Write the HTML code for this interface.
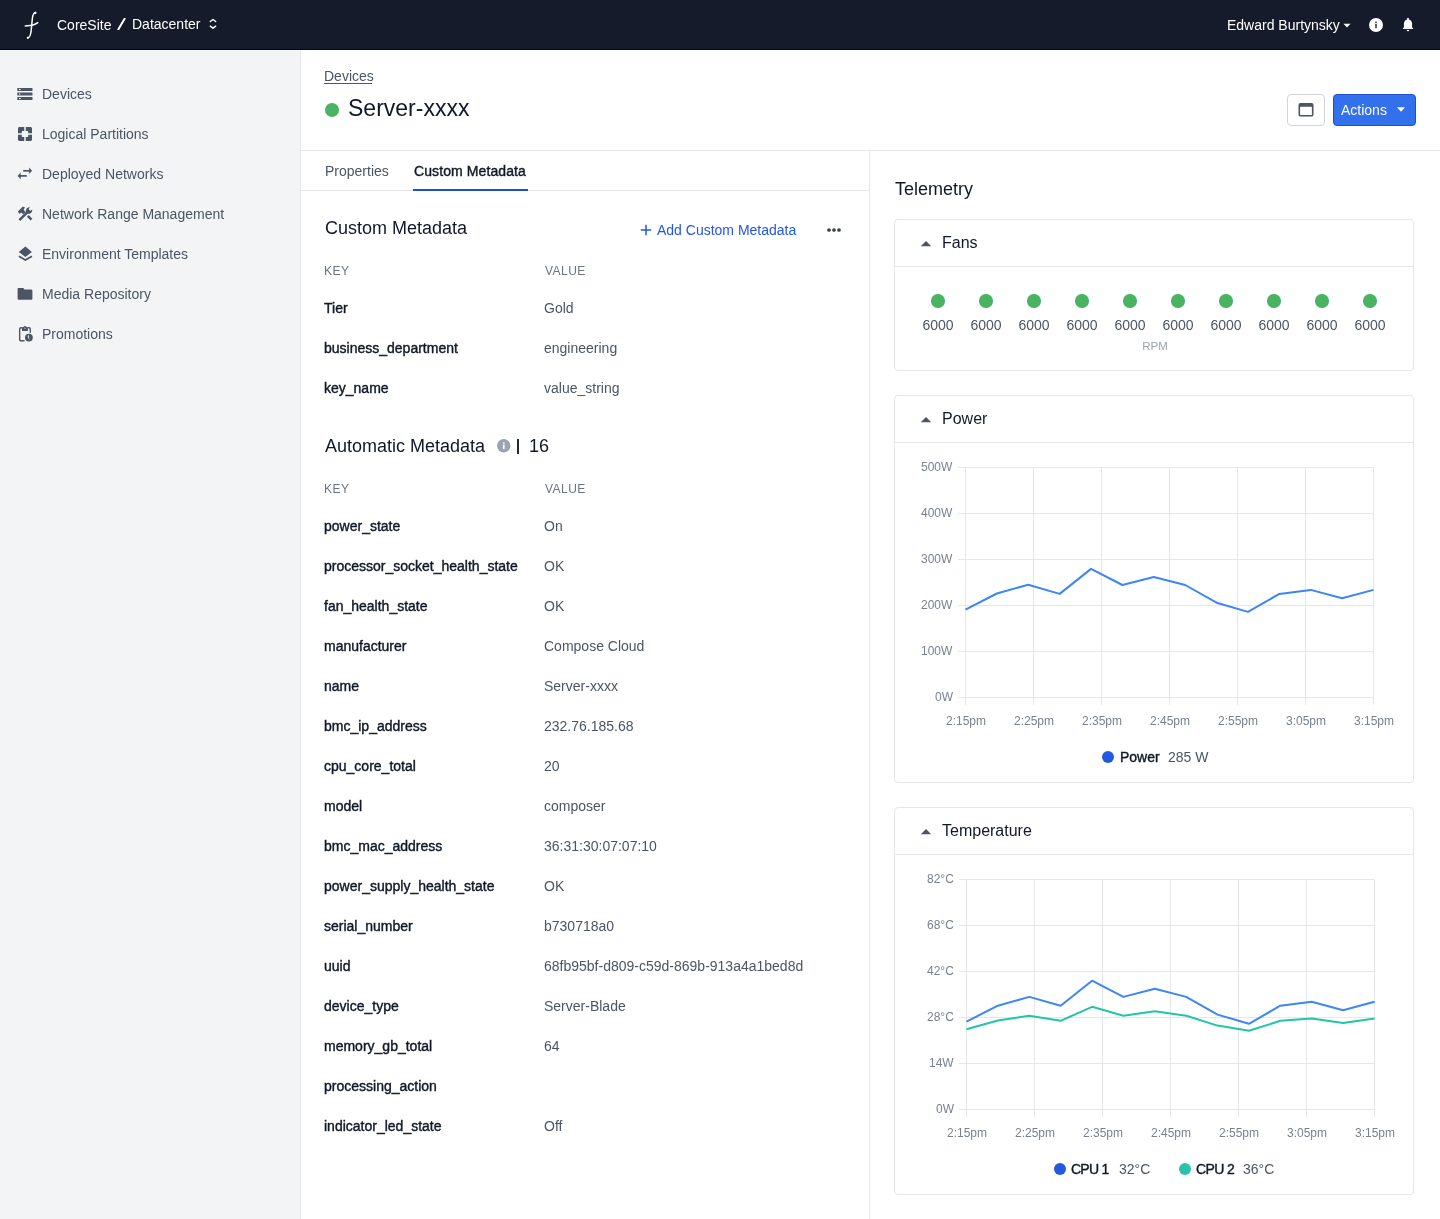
<!DOCTYPE html>
<html><head><meta charset="utf-8"><title>Server-xxxx</title>
<style>
html,body{margin:0;padding:0;background:#fff;width:1440px;height:1219px;overflow:hidden;position:relative}
body{font-family:"Liberation Sans",sans-serif}
.t{position:absolute;white-space:nowrap;line-height:1;will-change:transform}
</style></head><body>
<div style="position:absolute;left:0;top:0;width:1440px;height:50px;background:#151b2b;border-bottom:1px solid #000a18;box-sizing:border-box"></div>
<svg style="position:absolute;left:22px;top:10px" width="20" height="30" viewBox="0 0 20 30"><path d="M13.6 2.6 C11.6 2.8 10.7 5.5 10.3 9 L9.1 21 C8.7 25.2 7.6 27.4 5.7 27.9" fill="none" stroke="#fff" stroke-width="1.5" stroke-linecap="round"/><circle cx="13.4" cy="2.9" r="1.05" fill="#fff"/><circle cx="5.8" cy="27.7" r="1.05" fill="#fff"/><path d="M3.3 15.9 C5.5 15.7 8 15.6 10 15.2 C12 14.8 14 14 15.8 12.7" fill="none" stroke="#fff" stroke-width="1.5" stroke-linecap="round"/></svg>
<div class="t" style="left:56.5px;top:18.15px;font-size:14px;color:#ffffff;">CoreSite</div>
<svg style="position:absolute;left:117px;top:18px" width="9" height="12" viewBox="0 0 9 12"><path d="M7.6 0.8 L1.4 11.2" stroke="#fff" stroke-width="2" stroke-linecap="round"/></svg>
<div class="t" style="left:131.5px;top:17.15px;font-size:14px;color:#ffffff;">Datacenter</div>
<svg style="position:absolute;left:209px;top:18px" width="8" height="12" viewBox="0 0 8 12"><path d="M1.3 3.5 L4 1.5 L6.7 3.5 M1.3 8.2 L4 10.2 L6.7 8.2" fill="none" stroke="#fff" stroke-width="1.5" stroke-linecap="round" stroke-linejoin="round"/></svg>
<div class="t" style="left:1226.5px;top:18.15px;font-size:14px;color:#ffffff;">Edward Burtynsky</div>
<svg style="position:absolute;left:1343px;top:22.5px" width="8" height="5" viewBox="0 0 8 5"><path d="M0.5 0.8 L7.5 0.8 L4 4.6 Z" fill="#fff"/></svg>
<svg style="position:absolute;left:1369px;top:18px" width="14" height="14" viewBox="0 0 14 14"><circle cx="7" cy="7" r="7" fill="#fff"/><rect x="6" y="3.6" width="2" height="1.6" fill="#555b68"/><rect x="6" y="6" width="2" height="4.2" fill="#555b68"/></svg>
<svg style="position:absolute;left:1402px;top:17px" width="12" height="15" viewBox="0 0 12 15"><path d="M6 0.8 C5.4 0.8 5.1 1.2 5.1 1.8 V2.4 C3.2 2.9 1.95 4.6 1.95 6.6 V10.2 L0.9 11.2 V12.1 H11.1 V11.2 L10.05 10.2 V6.6 C10.05 4.6 8.8 2.9 6.9 2.4 V1.8 C6.9 1.2 6.6 0.8 6 0.8 Z" fill="#fff"/><rect x="4.8" y="12.9" width="2.4" height="1.2" fill="#fff"/></svg>
<div style="position:absolute;left:0;top:50px;width:300px;height:1169px;background:#f3f4f6;border-right:1px solid #e5e7eb;box-sizing:content-box"></div>
<svg style="position:absolute;left:17px;top:88px" width="16" height="13" viewBox="0 0 16 13"><rect x="0.3" y="0" width="15.2" height="3" rx="0.6" fill="#4b5563"/><rect x="0.3" y="4.4" width="15.2" height="3.2" rx="0.6" fill="#4b5563"/><rect x="0.3" y="9" width="15.2" height="3" rx="0.6" fill="#4b5563"/><rect x="2" y="0.95" width="1.6" height="1.1" fill="#fff"/><rect x="2.3" y="5.25" width="1" height="1.5" fill="#fff"/><rect x="2" y="9.95" width="1.6" height="1.1" fill="#fff"/></svg>
<div class="t" style="left:41.5px;top:87.35px;font-size:14px;color:#4b5563;">Devices</div>
<svg style="position:absolute;left:18px;top:127px" width="14" height="14" viewBox="0 0 14 14"><path d="M1 0 H6.25 V3.9 H4.3 L3.8 4.4 V6.25 H0 V1 Z M7.75 0 H13 L14 1 V6.25 H10.2 V4.4 L9.7 3.9 H7.75 Z M0 7.75 H3.8 V9.6 L4.3 10.1 H6.25 V14 H1 L0 13 Z M10.2 7.75 H14 V13 L13 14 H7.75 V10.1 H9.7 L10.2 9.6 Z" fill="#4b5563"/></svg>
<div class="t" style="left:41.5px;top:127.35px;font-size:14px;color:#4b5563;">Logical Partitions</div>
<svg style="position:absolute;left:17px;top:167px" width="16" height="13" viewBox="0 0 16 13"><path d="M6.2 3.8 H13" stroke="#4b5563" stroke-width="1.7"/><path d="M12.1 0.5 L15.1 3.8 L12.1 7.1 Z" fill="#4b5563"/><path d="M3 8.9 H9.8" stroke="#4b5563" stroke-width="1.7"/><path d="M3.7 5.6 L0.6 8.9 L3.7 12.2 Z" fill="#4b5563"/></svg>
<div class="t" style="left:41.5px;top:167.35px;font-size:14px;color:#4b5563;">Deployed Networks</div>
<svg style="position:absolute;left:17px;top:206px" width="16" height="16" viewBox="0 0 16 16"><path d="M2.4 14.2 L10 6.6" stroke="#4b5563" stroke-width="2.5"/><path d="M0.9 5.6 L5.4 0.9 C6.5 0.7 7.4 0.9 7.9 1.3 L6.6 3.9 L8.6 6 L6.2 8.2 L4.2 6.6 L2.6 7.9 Z" fill="#4b5563"/><path d="M8.9 6.9 C8.5 5.2 8.9 3.1 10.6 1.8 C11.2 1.3 12 1.1 12.7 1.1 L11.7 3.2 L13.2 4.7 L15.2 3.7 C15.4 5.2 14.6 6.8 13.2 7.5 C12.2 7.9 11 7.9 10.2 7.6 Z" fill="#4b5563"/><path d="M10.8 9.9 L14.5 13.7" stroke="#4b5563" stroke-width="2.5"/></svg>
<div class="t" style="left:41.5px;top:207.35px;font-size:14px;color:#4b5563;">Network Range Management</div>
<svg style="position:absolute;left:18px;top:246px" width="15" height="16" viewBox="0 0 15 16"><path d="M7.4 0.6 L13.9 6 L7.4 10.9 L0.8 6 Z" fill="#4b5563"/><path d="M0.9 10.2 L7.4 14.1 L13.9 10.2" fill="none" stroke="#4b5563" stroke-width="1.7"/></svg>
<div class="t" style="left:41.5px;top:247.35px;font-size:14px;color:#4b5563;">Environment Templates</div>
<svg style="position:absolute;left:17px;top:287px" width="16" height="14" viewBox="0 0 16 14"><path d="M1.6 1 H6.2 L7.6 2.5 H14 C14.8 2.5 15.4 3.1 15.4 3.9 V11.4 C15.4 12.2 14.8 12.8 14 12.8 H2 C1.2 12.8 0.6 12.2 0.6 11.4 V2 C0.6 1.4 1 1 1.6 1 Z" fill="#4b5563"/></svg>
<div class="t" style="left:41.5px;top:287.35px;font-size:14px;color:#4b5563;">Media Repository</div>
<svg style="position:absolute;left:18px;top:325px" width="16" height="18" viewBox="0 0 16 18"><path d="M6.6 15.8 H3 C2.2 15.8 1.65 15.3 1.65 14.5 V4.2 C1.65 3.4 2.2 2.8 3 2.8 H4.2 M9.8 2.8 H11 C11.8 2.8 12.3 3.4 12.3 4.2 V7.8" fill="none" stroke="#4b5563" stroke-width="1.4"/><path d="M4 5.9 V3 C4 2.4 4.4 2.1 5 2.1 H5.6 C5.8 1.3 6.3 0.9 7 0.9 C7.7 0.9 8.2 1.3 8.4 2.1 H9 C9.6 2.1 9.9 2.4 9.9 3 V5.9 Z" fill="#4b5563"/><rect x="6.3" y="2.6" width="1.4" height="1.4" fill="#9ca3af"/><circle cx="10.9" cy="12.6" r="3.9" fill="#4b5563"/><path d="M10.4 10.3 V13 L11.6 14.2" fill="none" stroke="#e5e7eb" stroke-width="1"/></svg>
<div class="t" style="left:41.5px;top:327.35px;font-size:14px;color:#4b5563;">Promotions</div>
<div class="t" style="left:323.8px;top:68.95px;font-size:14px;color:#4b5563;">Devices</div>
<div style="position:absolute;left:324px;top:83px;width:48px;height:1px;background:#4b5563"></div>
<div style="position:absolute;left:325px;top:103px;width:14px;height:14px;border-radius:50%;background:#48b462"></div>
<div class="t" style="left:347.5px;top:96.53px;font-size:23px;color:#111827;">Server-xxxx</div>
<div style="position:absolute;left:1287px;top:94px;width:38px;height:32px;box-sizing:border-box;border:1px solid #d1d5db;border-radius:4px;background:#fff"></div>
<svg style="position:absolute;left:1298px;top:102px" width="16" height="15" viewBox="0 0 16 15"><path fill-rule="evenodd" fill="#4b5563" d="M2.4 1.1 H13.6 Q15.5 1.1 15.5 3 V12.7 Q15.5 14.6 13.6 14.6 H2.4 Q0.5 14.6 0.5 12.7 V3 Q0.5 1.1 2.4 1.1 Z M2.6 4.8 H13.4 Q13.9 4.8 13.9 5.3 V12.5 Q13.9 13 13.4 13 H2.6 Q2.1 13 2.1 12.5 V5.3 Q2.1 4.8 2.6 4.8 Z"/></svg>
<div style="position:absolute;left:1333px;top:94px;width:83px;height:32px;box-sizing:border-box;border:1px solid #1d4fd0;border-radius:4px;background:#3370ec"></div>
<div class="t" style="left:1341px;top:102.95px;font-size:14px;color:#ffffff;">Actions</div>
<svg style="position:absolute;left:1396px;top:106px" width="10" height="7" viewBox="0 0 10 7"><path d="M1 1.2 L9 1.2 L5 5.8 Z" fill="#fff"/></svg>
<div style="position:absolute;left:301px;top:150px;width:1139px;height:1px;background:#e5e7eb"></div>
<div style="position:absolute;left:869px;top:151px;width:1px;height:1068px;background:#e5e7eb"></div>
<div style="position:absolute;left:301px;top:190px;width:568px;height:1px;background:#e5e7eb"></div>
<div class="t" style="left:324.5px;top:164.35px;font-size:14px;color:#4b5563;">Properties</div>
<div class="t" style="left:414.2px;top:164.35px;font-size:14px;color:#111827;letter-spacing:0.1px;-webkit-text-stroke:0.4px #111827;">Custom Metadata</div>
<div style="position:absolute;left:413px;top:189px;width:115px;height:2px;background:#1d4ed8"></div>
<div class="t" style="left:324.8px;top:219.16px;font-size:18px;color:#111827;">Custom Metadata</div>
<svg style="position:absolute;left:640px;top:224px" width="12" height="12" viewBox="0 0 12 12"><path d="M6 0.8 V11.2 M0.8 6 H11.2" stroke="#2258e0" stroke-width="1.5"/></svg>
<div class="t" style="left:656.7px;top:223.15px;font-size:14px;color:#2258e0;">Add Custom Metadata</div>
<svg style="position:absolute;left:826px;top:227px" width="16" height="6" viewBox="0 0 16 6"><circle cx="3" cy="3" r="1.85" fill="#374151"/><circle cx="8" cy="3" r="1.85" fill="#374151"/><circle cx="13" cy="3" r="1.85" fill="#374151"/></svg>
<div class="t" style="left:324.3px;top:265.14px;font-size:12px;color:#6b7280;letter-spacing:0.45px;">KEY</div>
<div class="t" style="left:544.5px;top:265.14px;font-size:12px;color:#6b7280;letter-spacing:0.45px;">VALUE</div>
<div class="t" style="left:324.3px;top:300.95px;font-size:14px;color:#111827;-webkit-text-stroke:0.4px #111827;">Tier</div>
<div class="t" style="left:544.4px;top:300.95px;font-size:14px;color:#4b5563;">Gold</div>
<div class="t" style="left:324.3px;top:340.95px;font-size:14px;color:#111827;-webkit-text-stroke:0.4px #111827;">business_department</div>
<div class="t" style="left:544.4px;top:340.95px;font-size:14px;color:#4b5563;">engineering</div>
<div class="t" style="left:324.3px;top:380.95px;font-size:14px;color:#111827;-webkit-text-stroke:0.4px #111827;">key_name</div>
<div class="t" style="left:544.4px;top:380.95px;font-size:14px;color:#4b5563;">value_string</div>
<div class="t" style="left:325.3px;top:436.56px;font-size:18px;color:#111827;">Automatic Metadata</div>
<svg style="position:absolute;left:497.3px;top:439.3px" width="14" height="14" viewBox="0 0 14 14"><circle cx="6.7" cy="6.7" r="6.7" fill="#9ca3af"/><rect x="5.9" y="3.4" width="1.7" height="1.4" fill="#fff"/><rect x="5.9" y="5.7" width="1.7" height="4.4" fill="#fff"/></svg>
<div style="position:absolute;left:517px;top:439px;width:1.6px;height:15.4px;background:#1f2937"></div>
<div class="t" style="left:529.3px;top:436.56px;font-size:18px;color:#111827;">16</div>
<div class="t" style="left:324.3px;top:482.94px;font-size:12px;color:#6b7280;letter-spacing:0.45px;">KEY</div>
<div class="t" style="left:544.5px;top:482.94px;font-size:12px;color:#6b7280;letter-spacing:0.45px;">VALUE</div>
<div class="t" style="left:324.3px;top:519.15px;font-size:14px;color:#111827;-webkit-text-stroke:0.4px #111827;">power_state</div>
<div class="t" style="left:544.4px;top:519.15px;font-size:14px;color:#4b5563;">On</div>
<div class="t" style="left:324.3px;top:559.15px;font-size:14px;color:#111827;-webkit-text-stroke:0.4px #111827;">processor_socket_health_state</div>
<div class="t" style="left:544.4px;top:559.15px;font-size:14px;color:#4b5563;">OK</div>
<div class="t" style="left:324.3px;top:599.15px;font-size:14px;color:#111827;-webkit-text-stroke:0.4px #111827;">fan_health_state</div>
<div class="t" style="left:544.4px;top:599.15px;font-size:14px;color:#4b5563;">OK</div>
<div class="t" style="left:324.3px;top:639.15px;font-size:14px;color:#111827;-webkit-text-stroke:0.4px #111827;">manufacturer</div>
<div class="t" style="left:544.4px;top:639.15px;font-size:14px;color:#4b5563;">Compose Cloud</div>
<div class="t" style="left:324.3px;top:679.15px;font-size:14px;color:#111827;-webkit-text-stroke:0.4px #111827;">name</div>
<div class="t" style="left:544.4px;top:679.15px;font-size:14px;color:#4b5563;">Server-xxxx</div>
<div class="t" style="left:324.3px;top:719.15px;font-size:14px;color:#111827;-webkit-text-stroke:0.4px #111827;">bmc_ip_address</div>
<div class="t" style="left:544.4px;top:719.15px;font-size:14px;color:#4b5563;">232.76.185.68</div>
<div class="t" style="left:324.3px;top:759.15px;font-size:14px;color:#111827;-webkit-text-stroke:0.4px #111827;">cpu_core_total</div>
<div class="t" style="left:544.4px;top:759.15px;font-size:14px;color:#4b5563;">20</div>
<div class="t" style="left:324.3px;top:799.15px;font-size:14px;color:#111827;-webkit-text-stroke:0.4px #111827;">model</div>
<div class="t" style="left:544.4px;top:799.15px;font-size:14px;color:#4b5563;">composer</div>
<div class="t" style="left:324.3px;top:839.15px;font-size:14px;color:#111827;-webkit-text-stroke:0.4px #111827;">bmc_mac_address</div>
<div class="t" style="left:544.4px;top:839.15px;font-size:14px;color:#4b5563;">36:31:30:07:07:10</div>
<div class="t" style="left:324.3px;top:879.15px;font-size:14px;color:#111827;-webkit-text-stroke:0.4px #111827;">power_supply_health_state</div>
<div class="t" style="left:544.4px;top:879.15px;font-size:14px;color:#4b5563;">OK</div>
<div class="t" style="left:324.3px;top:919.15px;font-size:14px;color:#111827;-webkit-text-stroke:0.4px #111827;">serial_number</div>
<div class="t" style="left:544.4px;top:919.15px;font-size:14px;color:#4b5563;">b730718a0</div>
<div class="t" style="left:324.3px;top:959.15px;font-size:14px;color:#111827;-webkit-text-stroke:0.4px #111827;">uuid</div>
<div class="t" style="left:544.4px;top:959.15px;font-size:14px;color:#4b5563;">68fb95bf-d809-c59d-869b-913a4a1bed8d</div>
<div class="t" style="left:324.3px;top:999.15px;font-size:14px;color:#111827;-webkit-text-stroke:0.4px #111827;">device_type</div>
<div class="t" style="left:544.4px;top:999.15px;font-size:14px;color:#4b5563;">Server-Blade</div>
<div class="t" style="left:324.3px;top:1039.15px;font-size:14px;color:#111827;-webkit-text-stroke:0.4px #111827;">memory_gb_total</div>
<div class="t" style="left:544.4px;top:1039.15px;font-size:14px;color:#4b5563;">64</div>
<div class="t" style="left:324.3px;top:1079.15px;font-size:14px;color:#111827;-webkit-text-stroke:0.4px #111827;">processing_action</div>
<div class="t" style="left:324.3px;top:1119.15px;font-size:14px;color:#111827;-webkit-text-stroke:0.4px #111827;">indicator_led_state</div>
<div class="t" style="left:544.4px;top:1119.15px;font-size:14px;color:#4b5563;">Off</div>
<div class="t" style="left:894.5px;top:179.76px;font-size:18px;color:#111827;">Telemetry</div>
<div style="position:absolute;left:894px;top:219px;width:520px;height:152px;box-sizing:border-box;border:1px solid #e5e7eb;border-radius:4px;background:#fff"></div>
<div style="position:absolute;left:895px;top:266px;width:518px;height:1px;background:#e5e7eb"></div>
<svg style="position:absolute;left:920px;top:240px" width="12" height="7" viewBox="0 0 12 7"><path d="M0.8 6.2 L11.2 6.2 L6 0.9 Z" fill="#4b5563"/></svg>
<div class="t" style="left:941.6px;top:235.46px;font-size:16px;color:#111827;">Fans</div>
<div style="position:absolute;left:931.3px;top:294.3px;width:13.4px;height:13.4px;border-radius:50%;background:#48b462"></div>
<div class="t" style="left:738px;width:400px;text-align:center;top:318.15px;font-size:14px;color:#4b5563;">6000</div>
<div style="position:absolute;left:979.3px;top:294.3px;width:13.4px;height:13.4px;border-radius:50%;background:#48b462"></div>
<div class="t" style="left:786px;width:400px;text-align:center;top:318.15px;font-size:14px;color:#4b5563;">6000</div>
<div style="position:absolute;left:1027.3px;top:294.3px;width:13.4px;height:13.4px;border-radius:50%;background:#48b462"></div>
<div class="t" style="left:834px;width:400px;text-align:center;top:318.15px;font-size:14px;color:#4b5563;">6000</div>
<div style="position:absolute;left:1075.3px;top:294.3px;width:13.4px;height:13.4px;border-radius:50%;background:#48b462"></div>
<div class="t" style="left:882px;width:400px;text-align:center;top:318.15px;font-size:14px;color:#4b5563;">6000</div>
<div style="position:absolute;left:1123.3px;top:294.3px;width:13.4px;height:13.4px;border-radius:50%;background:#48b462"></div>
<div class="t" style="left:930px;width:400px;text-align:center;top:318.15px;font-size:14px;color:#4b5563;">6000</div>
<div style="position:absolute;left:1171.3px;top:294.3px;width:13.4px;height:13.4px;border-radius:50%;background:#48b462"></div>
<div class="t" style="left:978px;width:400px;text-align:center;top:318.15px;font-size:14px;color:#4b5563;">6000</div>
<div style="position:absolute;left:1219.3px;top:294.3px;width:13.4px;height:13.4px;border-radius:50%;background:#48b462"></div>
<div class="t" style="left:1026px;width:400px;text-align:center;top:318.15px;font-size:14px;color:#4b5563;">6000</div>
<div style="position:absolute;left:1267.3px;top:294.3px;width:13.4px;height:13.4px;border-radius:50%;background:#48b462"></div>
<div class="t" style="left:1074px;width:400px;text-align:center;top:318.15px;font-size:14px;color:#4b5563;">6000</div>
<div style="position:absolute;left:1315.3px;top:294.3px;width:13.4px;height:13.4px;border-radius:50%;background:#48b462"></div>
<div class="t" style="left:1122px;width:400px;text-align:center;top:318.15px;font-size:14px;color:#4b5563;">6000</div>
<div style="position:absolute;left:1363.3px;top:294.3px;width:13.4px;height:13.4px;border-radius:50%;background:#48b462"></div>
<div class="t" style="left:1170px;width:400px;text-align:center;top:318.15px;font-size:14px;color:#4b5563;">6000</div>
<div class="t" style="left:954.8px;width:400px;text-align:center;top:341.47px;font-size:11.5px;color:#9ca3af;">RPM</div>
<div style="position:absolute;left:894px;top:395px;width:520px;height:388px;box-sizing:border-box;border:1px solid #e5e7eb;border-radius:4px;background:#fff"></div>
<div style="position:absolute;left:895px;top:442px;width:518px;height:1px;background:#e5e7eb"></div>
<svg style="position:absolute;left:920px;top:416px" width="12" height="7" viewBox="0 0 12 7"><path d="M0.8 6.2 L11.2 6.2 L6 0.9 Z" fill="#4b5563"/></svg>
<div class="t" style="left:941.6px;top:411.46px;font-size:16px;color:#111827;">Power</div>
<div style="position:absolute;left:894px;top:807px;width:520px;height:388px;box-sizing:border-box;border:1px solid #e5e7eb;border-radius:4px;background:#fff"></div>
<div style="position:absolute;left:895px;top:854px;width:518px;height:1px;background:#e5e7eb"></div>
<svg style="position:absolute;left:920px;top:828px" width="12" height="7" viewBox="0 0 12 7"><path d="M0.8 6.2 L11.2 6.2 L6 0.9 Z" fill="#4b5563"/></svg>
<div class="t" style="left:941.6px;top:823.46px;font-size:16px;color:#111827;">Temperature</div>
<svg style="position:absolute;left:0;top:0" width="1440" height="1219" viewBox="0 0 1440 1219"><line x1="958" y1="467.5" x2="1373.5" y2="467.5" stroke="#e5e7eb" stroke-width="1"/><line x1="958" y1="513.5" x2="1373.5" y2="513.5" stroke="#e5e7eb" stroke-width="1"/><line x1="958" y1="559.5" x2="1373.5" y2="559.5" stroke="#e5e7eb" stroke-width="1"/><line x1="958" y1="605.5" x2="1373.5" y2="605.5" stroke="#e5e7eb" stroke-width="1"/><line x1="958" y1="651.5" x2="1373.5" y2="651.5" stroke="#e5e7eb" stroke-width="1"/><line x1="958" y1="697.5" x2="1373.5" y2="697.5" stroke="#e5e7eb" stroke-width="1"/><line x1="965.5" y1="467" x2="965.5" y2="705" stroke="#e5e7eb" stroke-width="1"/><line x1="1033.5" y1="467" x2="1033.5" y2="705" stroke="#e5e7eb" stroke-width="1"/><line x1="1101.5" y1="467" x2="1101.5" y2="705" stroke="#e5e7eb" stroke-width="1"/><line x1="1169.5" y1="467" x2="1169.5" y2="705" stroke="#e5e7eb" stroke-width="1"/><line x1="1237.5" y1="467" x2="1237.5" y2="705" stroke="#e5e7eb" stroke-width="1"/><line x1="1305.5" y1="467" x2="1305.5" y2="705" stroke="#e5e7eb" stroke-width="1"/><line x1="1373.5" y1="467" x2="1373.5" y2="705" stroke="#e5e7eb" stroke-width="1"/><polyline points="965.50,609.70 996.88,593.50 1028.27,584.70 1059.65,593.90 1091.04,568.90 1122.42,585.00 1153.81,577.00 1185.19,585.00 1216.58,602.70 1247.96,611.90 1279.35,593.90 1310.73,589.90 1342.12,598.30 1373.50,589.90" fill="none" stroke="#3e86f5" stroke-width="2" stroke-linejoin="round"/></svg>
<div class="t" style="right:487.5px;top:461.14px;font-size:12px;color:#798190;">500W</div>
<div class="t" style="right:487.5px;top:507.14px;font-size:12px;color:#798190;">400W</div>
<div class="t" style="right:487.5px;top:553.14px;font-size:12px;color:#798190;">300W</div>
<div class="t" style="right:487.5px;top:599.14px;font-size:12px;color:#798190;">200W</div>
<div class="t" style="right:487.5px;top:645.14px;font-size:12px;color:#798190;">100W</div>
<div class="t" style="right:487.5px;top:691.14px;font-size:12px;color:#798190;">0W</div>
<div class="t" style="left:765.5px;width:400px;text-align:center;top:714.84px;font-size:12px;color:#798190;">2:15pm</div>
<div class="t" style="left:833.5px;width:400px;text-align:center;top:714.84px;font-size:12px;color:#798190;">2:25pm</div>
<div class="t" style="left:901.5px;width:400px;text-align:center;top:714.84px;font-size:12px;color:#798190;">2:35pm</div>
<div class="t" style="left:969.5px;width:400px;text-align:center;top:714.84px;font-size:12px;color:#798190;">2:45pm</div>
<div class="t" style="left:1037.5px;width:400px;text-align:center;top:714.84px;font-size:12px;color:#798190;">2:55pm</div>
<div class="t" style="left:1105.5px;width:400px;text-align:center;top:714.84px;font-size:12px;color:#798190;">3:05pm</div>
<div class="t" style="left:1173.5px;width:400px;text-align:center;top:714.84px;font-size:12px;color:#798190;">3:15pm</div>
<div style="position:absolute;left:1102px;top:751px;width:12px;height:12px;border-radius:50%;background:#2458e0"></div>
<div class="t" style="left:1119.6px;top:750.15px;font-size:14px;color:#111827;-webkit-text-stroke:0.4px #111827;">Power</div>
<div class="t" style="left:1167.6px;top:750.15px;font-size:14px;color:#4b5563;">285 W</div>
<svg style="position:absolute;left:0;top:0" width="1440" height="1219" viewBox="0 0 1440 1219"><line x1="959" y1="879.5" x2="1374.5" y2="879.5" stroke="#e5e7eb" stroke-width="1"/><line x1="959" y1="925.5" x2="1374.5" y2="925.5" stroke="#e5e7eb" stroke-width="1"/><line x1="959" y1="971.5" x2="1374.5" y2="971.5" stroke="#e5e7eb" stroke-width="1"/><line x1="959" y1="1017.5" x2="1374.5" y2="1017.5" stroke="#e5e7eb" stroke-width="1"/><line x1="959" y1="1063.5" x2="1374.5" y2="1063.5" stroke="#e5e7eb" stroke-width="1"/><line x1="959" y1="1109.5" x2="1374.5" y2="1109.5" stroke="#e5e7eb" stroke-width="1"/><line x1="966.5" y1="879" x2="966.5" y2="1117" stroke="#e5e7eb" stroke-width="1"/><line x1="1034.5" y1="879" x2="1034.5" y2="1117" stroke="#e5e7eb" stroke-width="1"/><line x1="1102.5" y1="879" x2="1102.5" y2="1117" stroke="#e5e7eb" stroke-width="1"/><line x1="1170.5" y1="879" x2="1170.5" y2="1117" stroke="#e5e7eb" stroke-width="1"/><line x1="1238.5" y1="879" x2="1238.5" y2="1117" stroke="#e5e7eb" stroke-width="1"/><line x1="1306.5" y1="879" x2="1306.5" y2="1117" stroke="#e5e7eb" stroke-width="1"/><line x1="1374.5" y1="879" x2="1374.5" y2="1117" stroke="#e5e7eb" stroke-width="1"/><polyline points="966.50,1021.60 997.88,1005.70 1029.27,996.90 1060.65,1005.70 1092.04,980.70 1123.42,996.90 1154.81,988.80 1186.19,996.90 1217.58,1014.60 1248.96,1023.80 1280.35,1005.70 1311.73,1001.70 1343.12,1010.20 1374.50,1001.70" fill="none" stroke="#3e86f5" stroke-width="2" stroke-linejoin="round"/><polyline points="966.50,1029.30 997.88,1020.50 1029.27,1015.70 1060.65,1020.80 1092.04,1006.80 1123.42,1015.70 1154.81,1011.30 1186.19,1015.70 1217.58,1025.60 1248.96,1030.80 1280.35,1020.80 1311.73,1018.60 1343.12,1023.00 1374.50,1018.60" fill="none" stroke="#22c6a5" stroke-width="2" stroke-linejoin="round"/></svg>
<div class="t" style="right:486.5px;top:873.14px;font-size:12px;color:#798190;">82°C</div>
<div class="t" style="right:486.5px;top:919.14px;font-size:12px;color:#798190;">68°C</div>
<div class="t" style="right:486.5px;top:965.14px;font-size:12px;color:#798190;">42°C</div>
<div class="t" style="right:486.5px;top:1011.14px;font-size:12px;color:#798190;">28°C</div>
<div class="t" style="right:486.5px;top:1057.14px;font-size:12px;color:#798190;">14W</div>
<div class="t" style="right:486.5px;top:1103.14px;font-size:12px;color:#798190;">0W</div>
<div class="t" style="left:766.5px;width:400px;text-align:center;top:1126.84px;font-size:12px;color:#798190;">2:15pm</div>
<div class="t" style="left:834.5px;width:400px;text-align:center;top:1126.84px;font-size:12px;color:#798190;">2:25pm</div>
<div class="t" style="left:902.5px;width:400px;text-align:center;top:1126.84px;font-size:12px;color:#798190;">2:35pm</div>
<div class="t" style="left:970.5px;width:400px;text-align:center;top:1126.84px;font-size:12px;color:#798190;">2:45pm</div>
<div class="t" style="left:1038.5px;width:400px;text-align:center;top:1126.84px;font-size:12px;color:#798190;">2:55pm</div>
<div class="t" style="left:1106.5px;width:400px;text-align:center;top:1126.84px;font-size:12px;color:#798190;">3:05pm</div>
<div class="t" style="left:1174.5px;width:400px;text-align:center;top:1126.84px;font-size:12px;color:#798190;">3:15pm</div>
<div style="position:absolute;left:1054px;top:1163px;width:12px;height:12px;border-radius:50%;background:#2458e0"></div>
<div class="t" style="left:1071.3px;top:1162.15px;font-size:14px;color:#111827;letter-spacing:-0.75px;-webkit-text-stroke:0.4px #111827;">CPU 1</div>
<div class="t" style="left:1118.5px;top:1162.15px;font-size:14px;color:#4b5563;">32°C</div>
<div style="position:absolute;left:1179px;top:1163px;width:12px;height:12px;border-radius:50%;background:#27c4a8"></div>
<div class="t" style="left:1195.8px;top:1162.15px;font-size:14px;color:#111827;letter-spacing:-0.6px;-webkit-text-stroke:0.4px #111827;">CPU 2</div>
<div class="t" style="left:1243px;top:1162.15px;font-size:14px;color:#4b5563;">36°C</div>
</body></html>
